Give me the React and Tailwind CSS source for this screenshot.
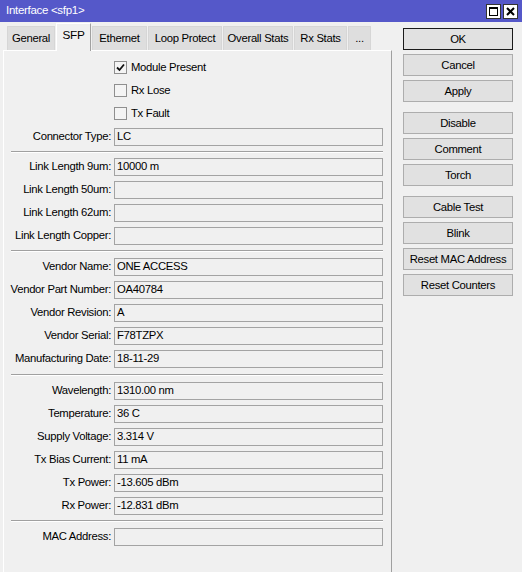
const TABS = [
  { name: 'General', w: 'w-[48px]' },
  { name: 'SFP', w: 'w-[35px]', active: true },
  { name: 'Ethernet', w: 'w-[55px]' },
  { name: 'Loop Protect', w: 'w-[74px]' },
  { name: 'Overall Stats', w: 'w-[70px]' },
  { name: 'Rx Stats', w: 'w-[53px]' },
  { name: '...', w: 'w-[23px]' },
];

const GROUPS = [
  ['OK', 'Cancel', 'Apply'],
  ['Disable', 'Comment', 'Torch'],
  ['Cable Test', 'Blink', 'Reset MAC Address', 'Reset Counters'],
];

const SECTIONS = [
  { sep: 'h-[7px]', rows: [['Link Length 9um', '10000 m'], ['Link Length 50um', ''], ['Link Length 62um', ''], ['Link Length Copper', '']] },
  {
    sep: 'h-[8px]',
    rows: [
      ['Vendor Name', 'ONE ACCESS'],
      ['Vendor Part Number', 'OA40784'],
      ['Vendor Revision', 'A'],
      ['Vendor Serial', 'F78TZPX'],
      ['Manufacturing Date', '18-11-29'],
    ],
  },
  {
    sep: 'h-[9px]',
    rows: [
      ['Wavelength', '1310.00 nm'],
      ['Temperature', '36 C'],
      ['Supply Voltage', '3.314 V'],
      ['Tx Bias Current', '11 mA'],
      ['Tx Power', '-13.605 dBm'],
      ['Rx Power', '-12.831 dBm'],
    ],
  },
  { sep: 'h-[8px]', rows: [['MAC Address', '']] },
];

function Field({ label, value }) {
  return (
    <div className="flex h-[23px] items-center">
      <div className="w-[107px] text-right whitespace-nowrap">{label}:</div>
      <div className="ml-[3px] flex h-[18px] w-[269px] items-center border border-[#a3a3a3] bg-[#f0f0f0] pl-[2px] whitespace-nowrap">
        {value}
      </div>
    </div>
  );
}

function Check({ label, checked }) {
  return (
    <div className="flex h-[23px] items-center">
      <div className="ml-[110px] flex h-[13px] w-[13px] items-center justify-center border border-[#8f8f8f] bg-[#f4f4f4]">
        {checked && (
          <svg width="9" height="9" viewBox="0 0 9 9">
            <path d="M1 4.5 L3.5 7 L8 1.5" fill="none" stroke="#111" strokeWidth="1.8" />
          </svg>
        )}
      </div>
      <span className="ml-[4px]">{label}</span>
    </div>
  );
}

function Sep({ h }) {
  return (
    <div className={`flex ${h} items-center`}>
      <div className="ml-[7px] w-[372px] border-t border-b border-t-[#a0a0a0] border-b-white" />
    </div>
  );
}

export default function App() {
  return (
    <div className="flex h-[572px] w-[522px] flex-col overflow-hidden bg-[#f0f0f0] font-['Liberation_Sans',Arial,sans-serif] text-[11.3px] tracking-[-0.3px] text-black">
      <div className="flex h-[22px] items-center bg-[#5558c9] pl-[6px] pr-[4px] text-white">
        <span className="text-[11.5px]">Interface &lt;sfp1&gt;</span>
        <div className="ml-auto flex gap-[2px]">
          <div className="flex h-[15px] w-[15px] items-center justify-center border border-[#333] bg-white">
            <div className="h-[9px] w-[9px] border border-t-2 border-black" />
          </div>
          <div className="flex h-[15px] w-[15px] items-center justify-center border border-[#333] bg-white">
            <svg width="9" height="9" viewBox="0 0 9 9">
              <path d="M1 1 L8 8 M8 1 L1 8" stroke="#000" strokeWidth="2" />
            </svg>
          </div>
        </div>
      </div>

      <div className="flex flex-1">
        <div className="flex w-[392px] flex-col">
          <div className="flex h-[28px] items-end gap-[1px] pl-[7px]">
            {TABS.map((t) =>
              t.active ? (
                <div
                  key={t.name}
                  className={`${t.w} relative z-10 -mb-px flex h-[28px] items-center justify-center border-l border-t border-r border-l-white border-t-white border-r-[#a0a0a0] bg-[#f0f0f0] pb-[3px] text-[11.8px]`}
                >
                  {t.name}
                </div>
              ) : (
                <div
                  key={t.name}
                  className={`${t.w} flex h-[24px] items-center justify-center border border-b-0 border-[#d6d6d6] bg-[#dedede] whitespace-nowrap`}
                >
                  {t.name}
                </div>
              )
            )}
          </div>
          <div className="ml-[3px] w-[389px] flex-1 border-l border-t border-r border-l-white border-t-white border-r-[#a0a0a0] pt-[5px]">
            <Check label="Module Present" checked />
            <Check label="Rx Lose" />
            <Check label="Tx Fault" />
            <Field label="Connector Type" value="LC" />
            {SECTIONS.map((s, i) => (
              <div key={i}>
                <Sep h={s.sep} />
                {s.rows.map(([l, v]) => (
                  <Field key={l} label={l} value={v} />
                ))}
              </div>
            ))}
          </div>
        </div>

        <div className="flex flex-col gap-[10px] pl-[11px] pt-[6px]">
          {GROUPS.map((g, i) => (
            <div key={i} className="flex flex-col gap-[4px]">
              {g.map((b) => (
                <div
                  key={b}
                  className={`flex h-[22px] w-[110px] items-center justify-center border bg-[#e1e1e1] whitespace-nowrap ${
                    b === 'OK' ? 'border-[#1a1a1a]' : 'border-[#adadad]'
                  }`}
                >
                  {b}
                </div>
              ))}
            </div>
          ))}
        </div>
      </div>
    </div>
  );
}
